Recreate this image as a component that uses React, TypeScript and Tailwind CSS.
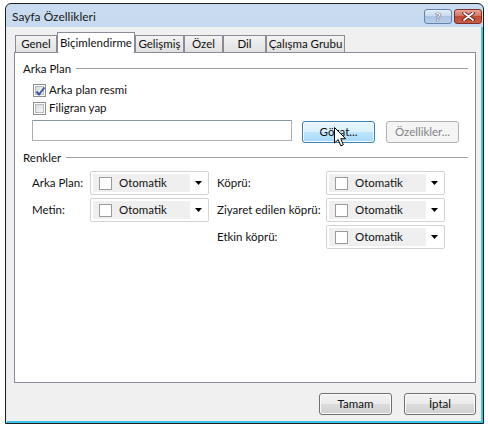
import React from "react";

function CheckBox({ checked }: { checked?: boolean }) {
  return (
    <div className="w-[13px] h-[13px] border border-[#8e8f8f] bg-white p-[1px] shrink-0 relative">
      <div className="w-full h-full border border-[#b8bcc2] bg-linear-to-br from-[#d6d9de] to-[#f7f7f7]" />
      {checked && (
        <svg
          className="absolute left-[1px] top-[1px]"
          width="11"
          height="11"
          viewBox="0 0 11 11"
        >
          <path
            d="M1.5 5.5 L4 8.5 L9.5 1.5"
            fill="none"
            stroke="#3a57a0"
            strokeWidth="2"
          />
        </svg>
      )}
    </div>
  );
}

function Tab({
  label,
  width,
  active,
}: {
  label: string;
  width: string;
  active?: boolean;
}) {
  if (active)
    return (
      <div
        className={`${width} h-[21px] -mb-px relative z-10 bg-white border border-b-0 border-[#898c95] flex justify-center pt-[2px] leading-[16px]`}
      >
        {label}
      </div>
    );
  return (
    <div
      className={`${width} h-[17px] border border-b-0 border-[#898c95] bg-linear-to-b from-[#f3f3f3] to-[#e1e1e1] flex justify-center leading-[16px]`}
    >
      {label}
    </div>
  );
}

function ColorCombo() {
  return (
    <div className="w-[119px] h-[24px] border border-[#d3d3d3] rounded-[2px] bg-white flex items-center pl-[2px]">
      <div className="w-[97px] h-[18px] bg-[#efefef] flex items-center pl-[6px]">
        <div className="w-[13px] h-[13px] border border-[#9b9b9b] bg-white" />
        <span className="ml-[7px]">Otomatik</span>
      </div>
      <div className="flex-1 flex justify-center pr-[2px]">
        <svg width="7" height="4" viewBox="0 0 7 4">
          <polygon points="0,0 7,0 3.5,4" fill="#000" />
        </svg>
      </div>
    </div>
  );
}

function GroupHeader({ label }: { label: string }) {
  return (
    <div className="flex items-center h-[16px]">
      <span>{label}</span>
      <div className="flex-1 ml-[5px] h-px bg-[#a0a0a0] mt-[-1px]" />
    </div>
  );
}

export default function App() {
  return (
    <div className="w-[488px] h-[424px] bg-white pt-[3px] pl-[5px] font-[Lato,sans-serif] text-[11.5px] text-[#111]">
      <div className="w-[479px] h-[421px] flex flex-col border border-[#1e1e1e] rounded-t-[6px] bg-linear-to-b from-[#c8dbf0] to-[#b8cfe9] overflow-hidden">
        {/* title bar */}
        <div className="h-[23px] flex items-start pl-[6px] pr-[1px] shrink-0">
          <span className="mt-[4px] text-[12px] text-[#1a1a1a]">
            Sayfa Özellikleri
          </span>
          <div className="ml-auto mt-[5px] flex gap-[2px]">
            <div className="w-[28px] h-[15px] rounded-[3px] border border-[#6584ab] bg-[linear-gradient(#e3edf8,#c6d8ed_50%,#acc4e2_50%,#b9d0ea)] flex items-center justify-center text-white font-bold text-[12px] leading-none [text-shadow:0_0_1px_#223,0_0_1px_#223]">
              ?
            </div>
            <div className="w-[28px] h-[15px] rounded-[3px] border border-[#7a3128] bg-[linear-gradient(#e8a699,#d3705d_50%,#c24a33_50%,#cc5b43)] flex items-center justify-center">
              <svg width="13" height="9" viewBox="0 0 13 9">
                <path
                  d="M2 1 L11 8 M11 1 L2 8"
                  stroke="#3a1510"
                  strokeWidth="3.4"
                  strokeLinecap="round"
                />
                <path
                  d="M2 1 L11 8 M11 1 L2 8"
                  stroke="#fff"
                  strokeWidth="1.8"
                  strokeLinecap="round"
                />
              </svg>
            </div>
          </div>
        </div>

        {/* client area */}
        <div className="flex-1 flex flex-col bg-[#f0f0f0] border-l border-l-[#e3ecf6] border-r-2 border-r-[#3bc3ea] border-b-2 border-b-[#3bc3ea] pt-[5px]">
          <div className="ml-[8px] h-[20px] flex items-end">
            <Tab label="Genel" width="w-[42px]" />
            <Tab label="Biçimlendirme" width="w-[78px]" active />
            <Tab label="Gelişmiş" width="w-[49px]" />
            <Tab label="Özel" width="w-[39px]" />
            <Tab label="Dil" width="w-[43px]" />
            <Tab label="Çalışma Grubu" width="w-[79px]" />
          </div>

          <div className="ml-[7px] w-[462px] h-[331px] border border-[#898c95] bg-white pl-[8px] pr-[7px] pt-[8px] shrink-0">
            <GroupHeader label="Arka Plan" />
            <div className="pl-[9px]">
              <div className="mt-[4px] h-[18px] flex items-center gap-[3px] pl-px">
                <CheckBox checked />
                <span>Arka plan resmi</span>
              </div>
              <div className="h-[18px] flex items-center gap-[3px] pl-px">
                <CheckBox />
                <span>Filigran yap</span>
              </div>
              <div className="mt-[3px] flex items-start">
                <div className="w-[260px] h-[21px] border border-[#abadb3] border-t-[#8c96a3] bg-white" />
                <div className="relative ml-[10px] mt-px w-[73px] h-[22px] rounded-[3px] border border-[#3c7fb1] bg-[linear-gradient(#eaf6fd,#d9f0fc_50%,#bee6fd_50%,#a7d9f5)] shadow-[inset_0_0_0_1px_#f4fbff] flex items-center justify-center">
                  Gözat...
                  <svg
                    className="absolute left-[31px] top-[5px]"
                    width="13"
                    height="20"
                    viewBox="0 0 13 20"
                  >
                    <path
                      d="M0.5 0.5 L0.5 16 L4.2 12.6 L6.8 18.8 L9.3 17.8 L6.8 11.7 L11.6 11.7 Z"
                      fill="#fff"
                      stroke="#000"
                      strokeWidth="1"
                      strokeLinejoin="round"
                    />
                  </svg>
                </div>
                <div className="ml-[11px] mt-px w-[73px] h-[22px] rounded-[3px] border border-[#adb2b5] bg-[#f4f4f4] text-[#838383] flex items-center justify-center">
                  Özellikler...
                </div>
              </div>
            </div>

            <div className="mt-[7px]">
              <GroupHeader label="Renkler" />
            </div>
            <div className="mt-[5px] pl-[9px] grid grid-cols-[58px_127px_109px_119px] gap-y-[3px] items-center">
              <span>Arka Plan:</span>
              <ColorCombo />
              <span>Köprü:</span>
              <ColorCombo />

              <span>Metin:</span>
              <ColorCombo />
              <span>Ziyaret edilen köprü:</span>
              <ColorCombo />

              <span />
              <span />
              <span>Etkin köprü:</span>
              <ColorCombo />
            </div>
          </div>

          <div className="mt-[10px] flex justify-end gap-[12px] pr-[5px]">
            <div className="w-[73px] h-[22px] rounded-[3px] border border-[#707070] bg-[linear-gradient(#f2f2f2,#ebebeb_50%,#dddddd_50%,#cfcfcf)] shadow-[inset_0_0_0_1px_#fbfbfb] flex items-center justify-center">
              Tamam
            </div>
            <div className="w-[72px] h-[22px] rounded-[3px] border border-[#707070] bg-[linear-gradient(#f2f2f2,#ebebeb_50%,#dddddd_50%,#cfcfcf)] shadow-[inset_0_0_0_1px_#fbfbfb] flex items-center justify-center">
              İptal
            </div>
          </div>
        </div>
      </div>
    </div>
  );
}
